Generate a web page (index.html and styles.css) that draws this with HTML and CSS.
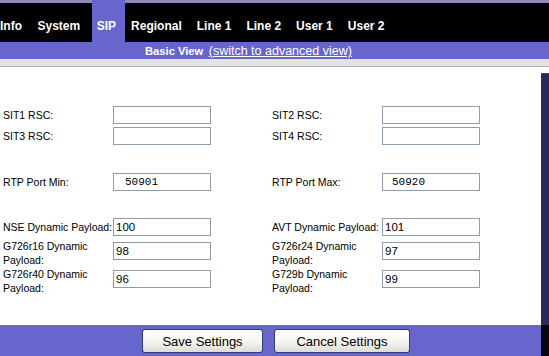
FILE: index.html
```html
<!DOCTYPE html>
<html>
<head>
<meta charset="utf-8">
<link rel="stylesheet" href="styles.css">
</head>
<body>
<div class="nav">
  <div class="tab first">Info</div>
  <div class="tab">System</div>
  <div class="tab active">SIP</div>
  <div class="tab after">Regional</div>
  <div class="tab">Line 1</div>
  <div class="tab">Line 2</div>
  <div class="tab">User 1</div>
  <div class="tab">User 2</div>
</div>
<div class="subbar"><b>Basic View</b> <a class="switch">(switch to advanced view)</a></div>
<div class="strip"></div>
<div class="main">
  <div class="content">
    <div class="row r21">
      <span class="lbl">SIT1 RSC:</span><input class="fld" value=""><span></span>
      <span class="lbl">SIT2 RSC:</span><input class="fld" value="">
    </div>
    <div class="row r21">
      <span class="lbl">SIT3 RSC:</span><input class="fld" value=""><span></span>
      <span class="lbl">SIT4 RSC:</span><input class="fld" value="">
    </div>
    <div class="row r21 rtp">
      <span class="lbl">RTP Port Min:</span><input class="fld mono" value="50901"><span></span>
      <span class="lbl">RTP Port Max:</span><input class="fld mono r" value="50920">
    </div>
    <div class="row r24 nse">
      <span class="lbl">NSE Dynamic Payload:</span><input class="fld" value="100"><span></span>
      <span class="lbl">AVT Dynamic Payload:</span><input class="fld" value="101">
    </div>
    <div class="row tall">
      <span class="lbl">G726r16 Dynamic<br>Payload:</span><input class="fld" value="98"><span></span>
      <span class="lbl">G726r24 Dynamic<br>Payload:</span><input class="fld" value="97">
    </div>
    <div class="row tall">
      <span class="lbl">G726r40 Dynamic<br>Payload:</span><input class="fld" value="96"><span></span>
      <span class="lbl">G729b Dynamic<br>Payload:</span><input class="fld" value="99">
    </div>
  </div>
  <div class="side"></div>
</div>
<div class="foot">
  <div class="footbar">
    <button class="btn save">Save Settings</button>
    <button class="btn cancel">Cancel Settings</button>
  </div>
  <div class="footside"></div>
</div>
</body>
</html>
```
FILE: styles.css
```css
* { box-sizing: border-box; }
html, body { margin: 0; padding: 0; }
body {
  width: 549px;
  height: 356px;
  overflow: hidden;
  font-family: "Liberation Sans", Arial, sans-serif;
  background: #fff;
}
.nav {
  height: 42px;
  display: flex;
  background: linear-gradient(#8c8cab 0, #8c8cab 3px, #000033 3px, #000033 5px, #000 5px);
}
.tab {
  display: flex;
  align-items: center;
  padding: 10px 7.5px 0 7.5px;
  color: #fff;
  font-weight: bold;
  font-size: 12px;
  white-space: nowrap;
}
.tab.first { padding-left: 0; padding-right: 8px; }
.tab.active { background: #6666cc; padding-left: 5px; padding-right: 9px; margin-left: 4px; }
.tab.after { padding-left: 6px; }
.subbar {
  height: 17px;
  line-height: 15px;
  padding-top: 2px;
  background: #6666cc;
  color: #fff;
  padding-left: 145px;
  font-size: 12.5px;
  white-space: nowrap;
}
.subbar b { font-size: 11.2px; }
.switch { color: #fff; text-decoration: underline; margin-left: 2px; }
.strip {
  height: 8px;
  background: #e4e4e4;
  border-bottom: 1px solid #b4b4b4;
}
.main {
  display: flex;
  height: 258px;
}
.content {
  width: 541px;
  background: #fff;
  padding-top: 37px;
  padding-left: 3px;
}
.side {
  width: 8px;
  background: linear-gradient(#fff 0, #fff 6px, #3d3d75 6px, #3d3d75 7px, #2a2a5c 7px);
}
.row {
  display: grid;
  grid-template-columns: 110px 98px 61px 110px 98px;
  align-items: center;
  font-size: 10.5px;
  color: #000;
}
.r21 { height: 21px; }
.rtp { margin-top: 25px; }
.r24 { height: 24px; }
.nse { margin-top: 23px; }
.tall { height: 28px; align-items: start; }
.tall .lbl { line-height: 14px; }
.tall .fld { margin-top: 3px; }
.lbl { white-space: nowrap; }
.fld {
  width: 98px;
  height: 18px;
  border: 1px solid #8d9daa;
  background: #fff;
  padding: 0 0 0 2px;
  font-family: "Liberation Sans", Arial, sans-serif;
  font-size: 11.5px;
  color: #000;
  margin: 0;
  outline: none;
}
.fld.mono {
  font-family: "Liberation Mono", "Courier New", monospace;
  font-size: 11px;
  padding-left: 11px;
}
.fld.mono.r { padding-left: 9px; }
.foot {
  display: flex;
  height: 31px;
}
.footbar {
  width: 541px;
  background: #6666cc;
  display: flex;
  justify-content: center;
  align-items: center;
  gap: 11px;
  padding-left: 11px;
  padding-top: 1px;
}
.footside {
  width: 8px;
  background: #05050f;
}
.btn {
  height: 24px;
  border: 1px solid #2c3f6e;
  border-radius: 3px;
  background: linear-gradient(#ffffff, #f3f3ee 60%, #dcdcd4);
  font-family: "Liberation Sans", Arial, sans-serif;
  font-size: 13px;
  color: #000;
  padding: 0;
  margin: 0;
}
.save { width: 121px; }
.cancel { width: 136px; }
```
